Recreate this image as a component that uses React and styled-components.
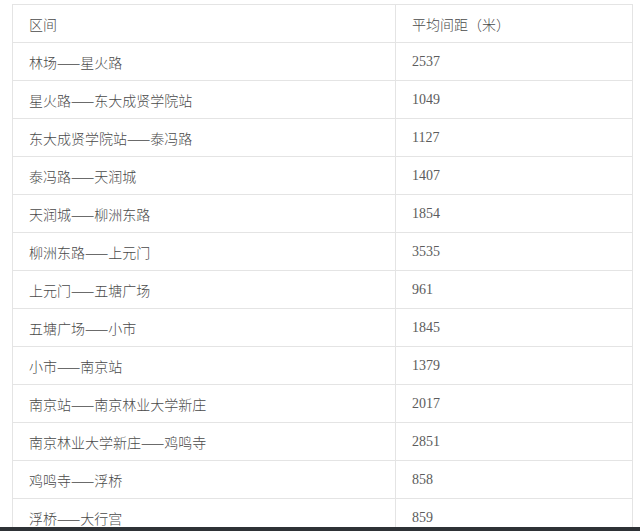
import styled, { createGlobalStyle } from 'styled-components';

const GlobalStyle = createGlobalStyle`
  html, body {
    margin: 0;
    padding: 0;
    background: #ffffff;
  }
`;

const Page = styled.div`
  width: 640px;
  height: 531px;
  overflow: hidden;
  display: flex;
  flex-direction: column;
  background: #ffffff;
`;

const Viewport = styled.div`
  flex: 1;
  overflow: hidden;
  padding: 4px 7px 0 12px;
`;

const BottomBar = styled.div`
  height: 4px;
  background: #2e3236;
`;

const Table = styled.table`
  width: 621px;
  border-collapse: collapse;
  table-layout: fixed;
  border: 1px solid #e4e4e4;
`;

const Cell = styled.td`
  height: 37px;
  padding: 0 16px;
  border: 1px solid #e4e4e4;
  vertical-align: middle;
  font-size: 14px;
  line-height: 20px;
  color: ${(props) => (props.numeric ? '#5c5c5c' : '#4a4a4a')};
  font-family: ${(props) =>
    props.numeric
      ? '"Liberation Serif", "Noto Sans CJK SC", serif'
      : '"Noto Sans CJK SC", sans-serif'};
  font-weight: 300;
  white-space: nowrap;
`;

const rows = [
  ['林场——星火路', '2537'],
  ['星火路——东大成贤学院站', '1049'],
  ['东大成贤学院站——泰冯路', '1127'],
  ['泰冯路——天润城', '1407'],
  ['天润城——柳洲东路', '1854'],
  ['柳洲东路——上元门', '3535'],
  ['上元门——五塘广场', '961'],
  ['五塘广场——小市', '1845'],
  ['小市——南京站', '1379'],
  ['南京站——南京林业大学新庄', '2017'],
  ['南京林业大学新庄——鸡鸣寺', '2851'],
  ['鸡鸣寺——浮桥', '858'],
  ['浮桥——大行宫', '859'],
];

const App = () => (
  <Page>
    <GlobalStyle />
    <Viewport>
      <Table>
        <colgroup>
          <col style={{ width: '383px' }} />
          <col />
        </colgroup>
        <tbody>
          <tr>
            <Cell>区间</Cell>
            <Cell>平均间距（米）</Cell>
          </tr>
          {rows.map(([section, distance]) => (
            <tr key={section}>
              <Cell>{section}</Cell>
              <Cell numeric>{distance}</Cell>
            </tr>
          ))}
        </tbody>
      </Table>
    </Viewport>
    <BottomBar />
  </Page>
);

export default App;
